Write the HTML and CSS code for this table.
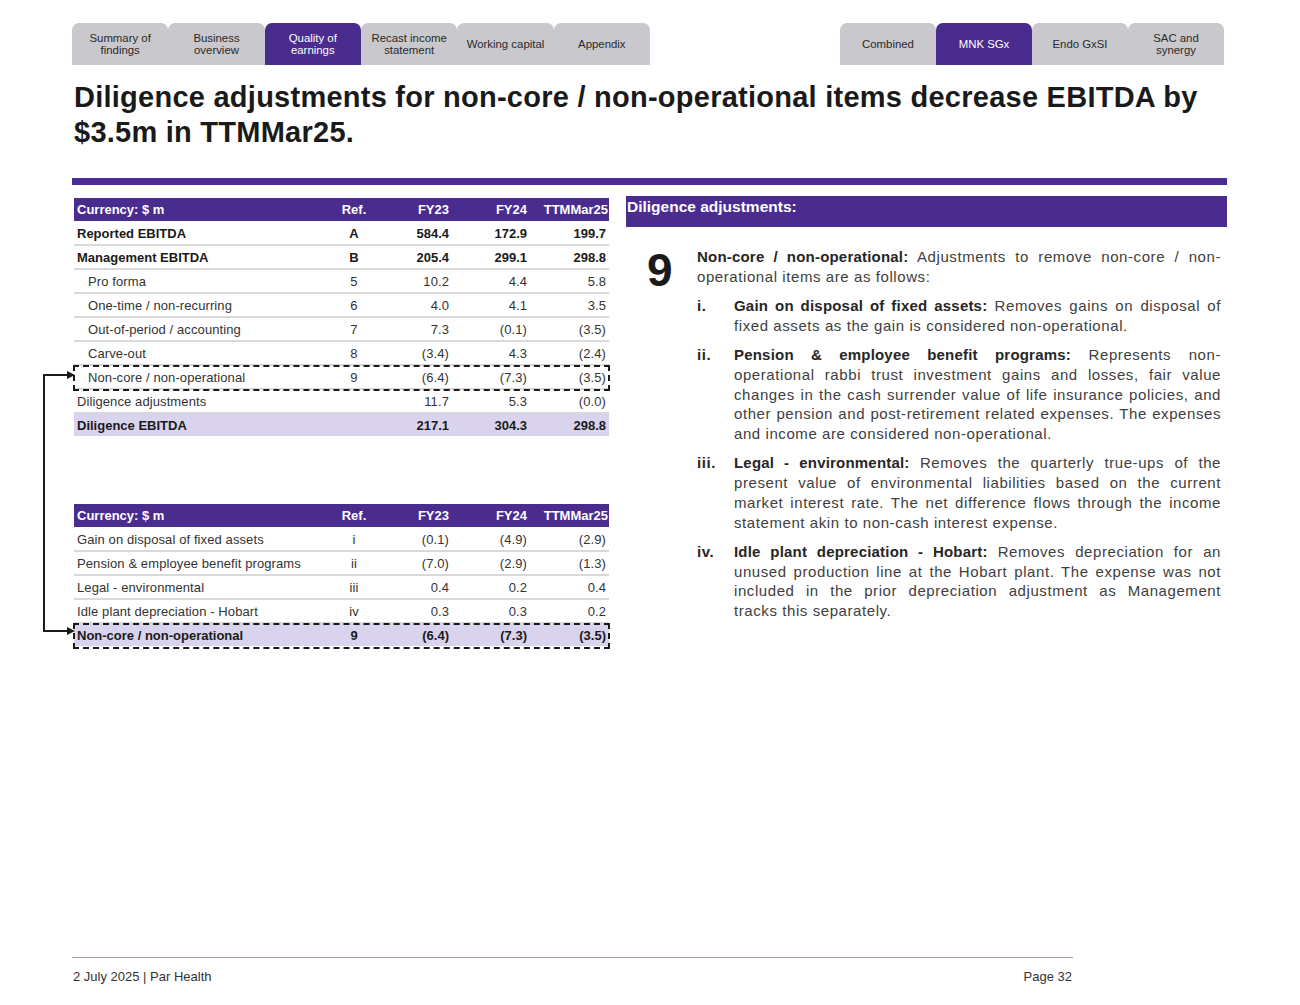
FILE: index.html
```html
<!DOCTYPE html>
<html lang="en">
<head>
<meta charset="utf-8">
<title>Diligence adjustments</title>
<link rel="stylesheet" href="styles.css">
</head>
<body>
<div class="page">
  <nav class="tabbar">
    <div class="tabs">
      <div class="tab">Summary of<br>findings</div>
      <div class="tab">Business<br>overview</div>
      <div class="tab active">Quality of<br>earnings</div>
      <div class="tab">Recast income<br>statement</div>
      <div class="tab">Working capital</div>
      <div class="tab">Appendix</div>
    </div>
    <div class="tabs right">
      <div class="tab">Combined</div>
      <div class="tab active">MNK SGx</div>
      <div class="tab">Endo GxSI</div>
      <div class="tab">SAC and<br>synergy</div>
    </div>
  </nav>

  <h1 class="title">Diligence adjustments for non-core / non-operational items decrease EBITDA by $3.5m in TTMMar25.</h1>
  <div class="rule"></div>

  <main class="content">
    <section class="left">
      <div class="tbl">
        <div class="row head"><span class="lbl">Currency: $ m</span><span class="ref">Ref.</span><span>FY23</span><span>FY24</span><span>TTMMar25</span></div>
        <div class="row bold"><span class="lbl">Reported EBITDA</span><span class="ref">A</span><span>584.4</span><span>172.9</span><span>199.7</span></div>
        <div class="row bold"><span class="lbl">Management EBITDA</span><span class="ref">B</span><span>205.4</span><span>299.1</span><span>298.8</span></div>
        <div class="row"><span class="lbl ind">Pro forma</span><span class="ref">5</span><span>10.2</span><span>4.4</span><span>5.8</span></div>
        <div class="row"><span class="lbl ind">One-time / non-recurring</span><span class="ref">6</span><span>4.0</span><span>4.1</span><span>3.5</span></div>
        <div class="row"><span class="lbl ind">Out-of-period / accounting</span><span class="ref">7</span><span>7.3</span><span>(0.1)</span><span>(3.5)</span></div>
        <div class="row"><span class="lbl ind">Carve-out</span><span class="ref">8</span><span>(3.4)</span><span>4.3</span><span>(2.4)</span></div>
        <div class="row dashed"><span class="lbl ind">Non-core / non-operational</span><span class="ref">9</span><span>(6.4)</span><span>(7.3)</span><span>(3.5)</span></div>
        <div class="row"><span class="lbl">Diligence adjustments</span><span class="ref"></span><span>11.7</span><span>5.3</span><span>(0.0)</span></div>
        <div class="row bold total"><span class="lbl">Diligence EBITDA</span><span class="ref"></span><span>217.1</span><span>304.3</span><span>298.8</span></div>
      </div>

      <div class="tbl second">
        <div class="row head"><span class="lbl">Currency: $ m</span><span class="ref">Ref.</span><span>FY23</span><span>FY24</span><span>TTMMar25</span></div>
        <div class="row"><span class="lbl">Gain on disposal of fixed assets</span><span class="ref">i</span><span>(0.1)</span><span>(4.9)</span><span>(2.9)</span></div>
        <div class="row"><span class="lbl">Pension &amp; employee benefit programs</span><span class="ref">ii</span><span>(7.0)</span><span>(2.9)</span><span>(1.3)</span></div>
        <div class="row"><span class="lbl">Legal - environmental</span><span class="ref">iii</span><span>0.4</span><span>0.2</span><span>0.4</span></div>
        <div class="row"><span class="lbl">Idle plant depreciation - Hobart</span><span class="ref">iv</span><span>0.3</span><span>0.3</span><span>0.2</span></div>
        <div class="row bold total dashed"><span class="lbl">Non-core / non-operational</span><span class="ref">9</span><span>(6.4)</span><span>(7.3)</span><span>(3.5)</span></div>
      </div>

      <svg class="connector" width="40" height="264" viewBox="0 0 40 264" aria-hidden="true">
        <path d="M29 3 H4 V259 H29" fill="none" stroke="#1a1a1a" stroke-width="2"/>
        <polygon points="27,-1 35,3 27,7" fill="#1a1a1a"/>
        <polygon points="27,255 35,259 27,263" fill="#1a1a1a"/>
      </svg>
    </section>

    <section class="right">
      <div class="panel-head">Diligence adjustments:</div>
      <div class="note">
        <div class="num">9</div>
        <div class="body">
          <p class="lead"><b>Non-core / non-operational:</b> Adjustments to remove non-core / non-operational items are as follows:</p>
          <ol class="items">
            <li><span class="mk">i.</span><p><b>Gain on disposal of fixed assets:</b> Removes gains on disposal of fixed assets as the gain is considered non-operational.</p></li>
            <li><span class="mk">ii.</span><p><b>Pension &amp; employee benefit programs:</b> Represents non-operational rabbi trust investment gains and losses, fair value changes in the cash surrender value of life insurance policies, and other pension and post-retirement related expenses. The expenses and income are considered non-operational.</p></li>
            <li><span class="mk">iii.</span><p><b>Legal - environmental:</b> Removes the quarterly true-ups of the present value of environmental liabilities based on the current market interest rate. The net difference flows through the income statement akin to non-cash interest expense.</p></li>
            <li><span class="mk">iv.</span><p><b>Idle plant depreciation - Hobart:</b> Removes depreciation for an unused production line at the Hobart plant. The expense was not included in the prior depreciation adjustment as Management tracks this separately.</p></li>
          </ol>
        </div>
      </div>
    </section>
  </main>

  <footer class="footer">
    <span>2 July 2025 | Par Health</span>
    <span>Page 32</span>
  </footer>
</div>
</body>
</html>
```

FILE: styles.css
```css
* { box-sizing: border-box; }
html, body { margin: 0; padding: 0; background: #fff; }
body {
  font-family: "Liberation Sans", Arial, sans-serif;
  color: #333;
}
.page {
  width: 1300px;
  height: 1005px;
  display: flex;
  flex-direction: column;
  padding: 23px 0 0 0;
}

/* Tabs */
.tabbar {
  display: flex;
  justify-content: space-between;
  padding: 0 76px 0 72px;
}
.tabs { display: flex; width: 578px; }
.tabs.right { width: 384px; }
.tab {
  flex: 1 1 0;
  height: 42px;
  background: #c9c8cd;
  border-radius: 7px 7px 0 0;
  display: flex;
  align-items: center;
  justify-content: center;
  text-align: center;
  font-size: 11.4px;
  line-height: 12px;
  color: #2a2a2a;
}
.tab.active { background: #4a2c8f; color: #fff; }

/* Title */
.title {
  margin: 15px 0 0 74px;
  width: 1140px;
  font-size: 29px;
  line-height: 35px;
  font-weight: bold;
  color: #1a1a1a;
  letter-spacing: 0.25px;
}
.rule {
  margin: 28px 73px 0 72px;
  height: 7px;
  background: #4b2c96;
}

/* Content */
.content {
  display: flex;
  padding-left: 74px;
  margin-top: 11px;
}
.left {
  position: relative;
  width: 535px;
  padding-top: 2px;
}
.right {
  width: 601px;
  margin-left: 17px;
}

.tbl { width: 535px; }
.tbl.second { margin-top: 66px; }
.row {
  display: grid;
  grid-template-columns: 256px 48px 74px 78px 79px;
  height: 24px;
  align-items: center;
  font-size: 13px;
  letter-spacing: 0.1px;
  color: #333;
  border-bottom: 2px solid #d9d9d9;
  padding-top: 1px;
}
.row span { text-align: right; padding-right: 3px; white-space: nowrap; }
.row .lbl { text-align: left; padding-left: 3px; }
.row .lbl.ind { padding-left: 14px; }
.row .ref { text-align: center; padding-right: 0; }
.row.head {
  background: #4a2c8f;
  color: #fff;
  font-weight: bold;
  letter-spacing: 0;
  border-bottom: 1px solid #fff;
  height: 24px;
  padding-top: 0;
}
.row.head span:last-child { padding-right: 1px; }
.row.bold { font-weight: bold; color: #1a1a1a; letter-spacing: 0; }
.row.total { background: #d9d3ed; border-bottom-color: #fff; }
.row.dashed {
  outline: 2px dashed #1a1a1a;
  outline-offset: -1px;
}

.connector {
  position: absolute;
  left: -34px;
  top: 176px;
  overflow: visible;
}

/* Right panel */
.panel-head {
  background: #4a2c8f;
  color: #fff;
  font-weight: bold;
  font-size: 15.5px;
  height: 31px;
  padding: 2px 0 0 1px;
}
.note {
  display: flex;
  margin-top: 20px;
}
.num {
  width: 71px;
  padding-left: 21px;
  font-size: 46px;
  font-weight: bold;
  line-height: 46px;
  color: #1a1a1a;
  padding-top: 0;
}
.body {
  width: 524px;
  font-size: 15px;
  letter-spacing: 0.58px;
  line-height: 19.7px;
  color: #404040;
  text-align: justify;
}
.body b { color: #262626; letter-spacing: 0.2px; }
.body p { margin: 0; }
.items { list-style: none; margin: 0; padding: 0; }
.items li {
  display: flex;
  margin-top: 9.7px;
}
.items .mk {
  width: 37px;
  flex: none;
  font-weight: bold;
  color: #262626;
}
.items p { flex: 1; }

/* Footer */
.footer {
  margin: auto 227px 0 72px;
  border-top: 1px solid #a79fc8;
  display: flex;
  justify-content: space-between;
  font-size: 13px;
  color: #333;
  padding: 11px 1px 21px 1px;
}
```
